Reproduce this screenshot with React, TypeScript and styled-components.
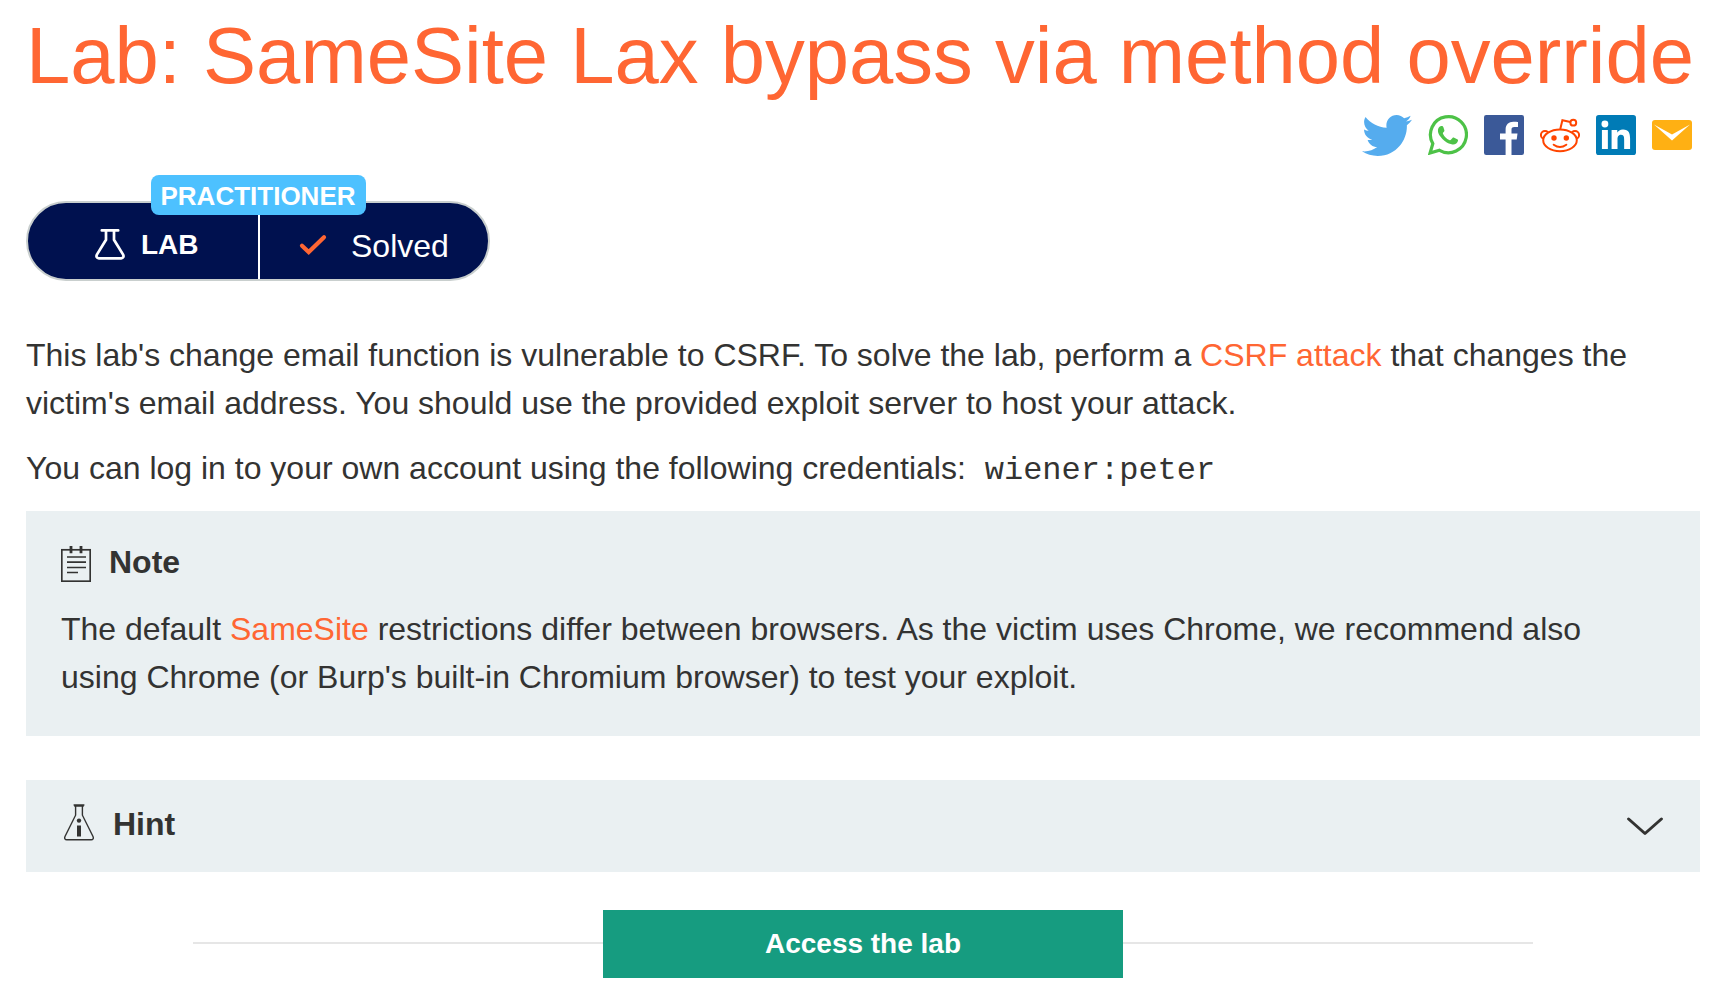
import React from "react";
import styled, { createGlobalStyle } from "styled-components";

const GlobalStyle = createGlobalStyle`
  * { box-sizing: border-box; }
  body {
    margin: 0;
    background: #fff;
    color: #333332;
    font-family: "Liberation Sans", Arial, sans-serif;
    font-size: 32px;
    line-height: 48px;
  }
  svg { display: block; flex: none; }
`;

const Page = styled.main`
  height: 998px;
  padding: 12px 30px 0 26px;
  overflow: hidden;
`;

const Title = styled.h1`
  margin: 0;
  color: #ff6633;
  font-size: 79.6px;
  font-weight: 400;
  line-height: 88px;
  white-space: nowrap;
`;

const ShareBar = styled.nav`
  display: flex;
  justify-content: flex-end;
  gap: 16px;
  height: 40px;
  margin-top: 15px;
  padding-right: 8px;
`;

const Status = styled.div`
  position: relative;
  display: flex;
  width: 464px;
  height: 80px;
  margin-top: 46px;
  border: 2px solid #c9cfce;
  border-radius: 40px;
  background: #00114f;
  color: #fff;
`;

const Level = styled.span`
  position: absolute;
  top: -28px;
  left: 123px;
  width: 215px;
  height: 40px;
  padding-right: 1px;
  border-radius: 8px;
  background: #4dc1ff;
  font-size: 26px;
  font-weight: 700;
  line-height: 42px;
  text-align: center;
`;

const StatusHalf = styled.div<{ $divided?: boolean }>`
  display: flex;
  align-items: center;
  width: ${(p) => (p.$divided ? "232px" : "228px")};
  padding: ${(p) => (p.$divided ? "8px 0 0 67px" : "10px 0 0 39px")};
  gap: ${(p) => (p.$divided ? "16px" : "24px")};
  border-right: ${(p) => (p.$divided ? "2px solid #fff" : "0")};

  svg { margin-bottom: 2px; }
`;

const Kind = styled.strong`
  font-size: 28px;
`;

const Paragraph = styled.p<{ $top?: number }>`
  margin: ${(p) => p.$top ?? 0}px 0 0;
`;

const Link = styled.a`
  color: #ff6633;
  text-decoration: none;
`;

const Code = styled.code`
  margin-left: 10px;
  font-family: "Liberation Mono", "Courier New", monospace;
  font-size: 32px;
  line-height: 1;
`;

const Panel = styled.section<{ $height: number; $top: number }>`
  height: ${(p) => p.$height}px;
  margin-top: ${(p) => p.$top}px;
  background: #eaf0f2;
`;

const NotePanel = styled(Panel)`
  padding: 27px 35px 0;
`;

const PanelHeading = styled.div`
  display: flex;
  align-items: center;
  gap: 18px;
  font-weight: 700;
`;

const NoteHeading = styled(PanelHeading)`
  svg { margin-top: 4px; }
`;

const HintHeading = styled(PanelHeading)`
  gap: 19px;
  svg { margin-bottom: 4px; }
`;

const HintPanel = styled(Panel)`
  display: flex;
  align-items: center;
  justify-content: space-between;
  padding: 0 37px 4px 38px;

  > svg { margin-top: 4px; }
`;

const Launch = styled.div`
  display: flex;
  align-items: center;
  width: 1340px;
  margin: 38px 0 0 167px;
`;

const Rule = styled.hr`
  flex: 1;
  height: 2px;
  margin: 0 0 2px;
  border: 0;
  background: #e6e6e6;
`;

const LaunchButton = styled.button`
  width: 520px;
  height: 68px;
  padding: 0;
  border: 0;
  background: #169c80;
  color: #fff;
  font: 700 28px "Liberation Sans", Arial, sans-serif;
`;

const Twitter = () => (
  <svg width="50" height="41" viewBox="0 48 512 416" preserveAspectRatio="none">
    <path
      fill="#55acee"
      d="M459.37 151.716c.325 4.548.325 9.097.325 13.645 0 138.72-105.583 298.558-298.558 298.558-59.452 0-114.68-17.219-161.137-47.106 8.447.974 16.568 1.299 25.34 1.299 49.055 0 94.213-16.568 130.274-44.832-46.132-.975-84.792-31.188-98.112-72.772 6.498.974 12.995 1.624 19.818 1.624 9.421 0 18.843-1.3 27.614-3.573-48.081-9.747-84.143-51.98-84.143-102.985v-1.299c13.969 7.797 30.214 12.67 47.431 13.319-28.264-18.843-46.781-51.005-46.781-87.391 0-19.492 5.197-37.36 14.294-52.954 51.655 63.675 129.3 105.258 216.365 109.807-1.624-7.797-2.599-15.918-2.599-24.04 0-57.828 46.782-104.934 104.934-104.934 30.213 0 57.502 12.67 76.67 33.137 23.715-4.548 46.456-13.32 66.599-25.34-7.798 24.366-24.366 44.833-46.132 57.827 21.117-2.273 41.584-8.122 60.426-16.243-14.292 20.791-32.161 39.308-52.628 54.253z"
    />
  </svg>
);

const WhatsApp = () => (
  <svg width="40" height="40" viewBox="0 0 40 40">
    <path d="M2.1 38 4.8 28.6A18 18 0 1 1 11.5 35.3Z" fill="none" stroke="#4dc247" strokeWidth="3.2" />
    <path
      fill="#4dc247"
      d="M13 11c1.2-.3 2 .2 2.4 1.2l.9 2.8c.3.9-.1 1.6-.9 2.3-.6.6-.7 1-.3 1.8 1.4 2.8 3.3 4.7 6.2 6 .8.4 1.2.2 1.8-.5l1.4-1.6c.5-.6 1-.6 1.7-.3l3 1.5c.8.4 1 .8.8 1.6-.5 2.6-3 3.9-5.6 3.6-2-.2-5-1.3-7.7-3.4-3-2.4-6.1-6.3-6.7-9.3-.5-2.9.8-5.2 3-5.7z"
    />
  </svg>
);

const Facebook = () => (
  <svg width="40" height="40" viewBox="0 0 40 40">
    <rect width="40" height="40" rx="2.2" fill="#3b5998" />
    <path
      fill="#fff"
      d="M27.5 40V24.5h5.2l.8-6h-6v-3.7c0-1.8.5-2.8 2.9-2.8H34V6.9c-.6-.1-2.6-.2-4.7-.2-4.6 0-7.7 2.8-7.7 7.8v4H16v6h5.6V40z"
    />
  </svg>
);

const Reddit = () => (
  <svg width="40" height="40" viewBox="0 0 40 40" fill="none" stroke="#ff4500" strokeWidth="2">
    <circle cx="5" cy="20" r="4.1" />
    <circle cx="35" cy="20" r="4.1" />
    <path d="M20.3 14 22.4 5.2 30.4 7" />
    <circle cx="33.3" cy="7.7" r="2.9" />
    <ellipse cx="20" cy="25.3" rx="16.8" ry="10.9" fill="#fff" />
    <path d="M13.7 29.7Q20 34.3 26.3 29.7" strokeLinecap="round" />
    <circle cx="14" cy="23" r="2.7" fill="#ff4500" stroke="none" />
    <circle cx="26.3" cy="23" r="2.7" fill="#ff4500" stroke="none" />
  </svg>
);

const LinkedIn = () => (
  <svg width="40" height="40" viewBox="0 0 24 24">
    <rect width="24" height="24" rx="1.7" fill="#007bb6" />
    <path
      fill="#fff"
      d="M20.447 20.452h-3.554v-5.569c0-1.328-.027-3.037-1.852-3.037-1.853 0-2.136 1.445-2.136 2.939v5.667H9.351V9h3.414v1.561h.046c.477-.9 1.637-1.85 3.37-1.85 3.601 0 4.267 2.37 4.267 5.455v6.286zM3.555 9h3.564v11.452H3.555z"
    />
    <circle cx="5.337" cy="5.37" r="2.06" fill="#fff" />
  </svg>
);

const Mail = () => (
  <svg width="40" height="40" viewBox="0 0 40 40">
    <rect y="5" width="40" height="30" rx="3" fill="#ffb013" />
    <path d="M2 9.5 20 19.6 38 9.5 20 25.4z" fill="#fff" />
  </svg>
);

const Flask = () => (
  <svg width="30" height="31" viewBox="0 0 30 31" fill="none" stroke="#fff" strokeWidth="2.7">
    <path
      d="M6.8 1.4h16.4M11 1.4v9.4L1.9 25.6c-1 2-.1 3.7 1.9 3.7h22.4c2 0 2.9-1.7 1.9-3.7L19 10.8V1.4"
      strokeLinecap="round"
    />
  </svg>
);

const Check = () => (
  <svg width="28" height="22" viewBox="0 0 28 22" fill="none" stroke="#ff6633" strokeWidth="4.2">
    <path d="M3 11.7 9.7 18 25 3.3" strokeLinecap="round" />
  </svg>
);

const Notepad = () => (
  <svg width="30" height="36" viewBox="0 0 30 36" fill="none" stroke="#333332" strokeWidth="1.7">
    <rect x=".8" y="3.8" width="28.4" height="31.4" />
    <path d="M10 0v7.3M20 0v7.3" strokeWidth="2.8" />
    <path d="M6 11h19M6 16.2h19M6 21.5h19M6 26.5h11" />
  </svg>
);

const HintFlask = () => (
  <svg width="30" height="37" viewBox="0 0 30 37" fill="none" stroke="#333332" strokeWidth="1.4">
    <path d="M9.6 1h10.8M10.2 2h9.6M11.6 2v9.2L1 32.5c-.8 2 0 3.2 1.8 3.2h24.4c1.8 0 2.6-1.2 1.8-3.2L18.4 11.2V2" />
    <circle cx="15" cy="16.6" r="2.2" fill="#333332" stroke="none" />
    <path d="M15 21.5v11" strokeWidth="4" />
  </svg>
);

const Chevron = () => (
  <svg width="36" height="19" viewBox="0 0 36 19" fill="none" stroke="#333332" strokeWidth="3">
    <path d="M1.6 2 18 16.5 34.4 2" strokeLinecap="round" strokeLinejoin="round" />
  </svg>
);

export default function App() {
  return (
    <>
      <GlobalStyle />
      <Page>
        <Title>Lab: SameSite Lax bypass via method override</Title>
        <ShareBar>
          <Twitter />
          <WhatsApp />
          <Facebook />
          <Reddit />
          <LinkedIn />
          <Mail />
        </ShareBar>
        <Status>
          <StatusHalf $divided>
            <Flask />
            <Kind>LAB</Kind>
          </StatusHalf>
          <StatusHalf>
            <Check />
            <span>Solved</span>
          </StatusHalf>
          <Level>PRACTITIONER</Level>
        </Status>
        <Paragraph $top={50}>
          This lab's change email function is vulnerable to CSRF. To solve the lab, perform a{" "}
          <Link>CSRF attack</Link> that changes the
          <br />
          victim's email address. You should use the provided exploit server to host your attack.
        </Paragraph>
        <Paragraph $top={17}>
          You can log in to your own account using the following credentials: <Code>wiener:peter</Code>
        </Paragraph>
        <NotePanel $height={225} $top={19}>
          <NoteHeading>
            <Notepad />
            <span>Note</span>
          </NoteHeading>
          <Paragraph $top={19}>
            The default <Link>SameSite</Link> restrictions differ between browsers. As the victim uses Chrome, we
            recommend also
            <br />
            using Chrome (or Burp's built-in Chromium browser) to test your exploit.
          </Paragraph>
        </NotePanel>
        <HintPanel $height={92} $top={44}>
          <HintHeading>
            <HintFlask />
            <span>Hint</span>
          </HintHeading>
          <Chevron />
        </HintPanel>
        <Launch>
          <Rule />
          <LaunchButton>Access the lab</LaunchButton>
          <Rule />
        </Launch>
      </Page>
    </>
  );
}
